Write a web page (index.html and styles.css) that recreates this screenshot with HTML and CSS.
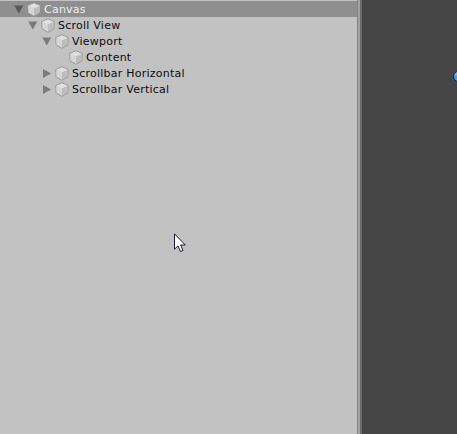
FILE: index.html
```html
<!DOCTYPE html>
<html lang="en">
<head>
<meta charset="utf-8">
<title>Hierarchy</title>
<link rel="stylesheet" href="styles.css">
</head>
<body>
<svg class="defs" aria-hidden="true">
  <symbol id="cube" viewBox="0 0 14 15">
    <path d="M7 .8 13.2 3.5 12.9 10.8 7 14.2 1.1 10.8 .8 3.5Z" fill="#d0d0d0" stroke="#929292" stroke-width=".9" stroke-linejoin="round"/>
    <path d="M7 1.4 12.6 3.8 7 6.5 1.4 3.8Z" fill="#e0e0e0"/>
    <path d="M1.3 3.9 7 6.6V13.6L1.6 10.5Z" fill="#d6d6d6"/>
    <path d="M12.7 3.9 7 6.6V13.6L12.4 10.5Z" fill="#bdbdbd"/>
  </symbol>
  <symbol id="down" viewBox="0 0 10 9"><path d="M.3 .5H9.2L4.8 8.5Z"/></symbol>
  <symbol id="right" viewBox="0 0 10 9"><path d="M1 0V9L9 4.5Z"/></symbol>
</svg>
<div class="editor">
  <div class="hierarchy">
    <div class="row selected"><svg class="arrow"><use href="#down"/></svg><svg class="cube"><use href="#cube"/></svg><span class="name">Canvas</span></div>
    <div class="row level-1"><svg class="arrow"><use href="#down"/></svg><svg class="cube"><use href="#cube"/></svg><span class="name">Scroll View</span></div>
    <div class="row level-2"><svg class="arrow"><use href="#down"/></svg><svg class="cube"><use href="#cube"/></svg><span class="name">Viewport</span></div>
    <div class="row level-3"><svg class="arrow"></svg><svg class="cube"><use href="#cube"/></svg><span class="name">Content</span></div>
    <div class="row level-2"><svg class="arrow"><use href="#right"/></svg><svg class="cube"><use href="#cube"/></svg><span class="name">Scrollbar Horizontal</span></div>
    <div class="row level-2"><svg class="arrow"><use href="#right"/></svg><svg class="cube"><use href="#cube"/></svg><span class="name">Scrollbar Vertical</span></div>
  </div>
  <div class="divider"></div>
  <div class="scene"><div class="handle"></div></div>
  <svg class="cursor" viewBox="0 0 12 20"><path d="M.5 .8V16.2L4 12.9 6.5 18.6 9 17.5 6.6 12H11.3Z" fill="#fff" stroke="#171b2b" stroke-width="1"/></svg>
</div>
</body>
</html>
```

FILE: styles.css
```css
body {
  margin: 0;
  overflow: hidden;
  background: #c2c2c2;
  font: 11px/16px "DejaVu Sans", sans-serif;
  letter-spacing: 0.24px;
  color: #0b0b0b;
}
.defs { position: absolute; width: 0; height: 0; }
.editor { display: flex; position: relative; height: 434px; }
.hierarchy {
  box-sizing: border-box;
  width: 357px;
  padding-top: 1px;
  background: #c2c2c2;
}
.row {
  display: flex;
  align-items: center;
  height: 16px;
  padding-left: 14px;
  white-space: nowrap;
}
.selected { background: #8f8f8f; color: #f0f0f0; }
.level-1 { padding-left: 28px; }
.level-2 { padding-left: 42px; }
.level-3 { padding-left: 56px; }
.name { padding-top: 2px; }
.arrow { width: 10px; height: 9px; margin-right: 3px; fill: #7b7b7b; }
.selected .arrow { fill: #585858; }
.cube { width: 14px; height: 15px; margin-right: 3px; }
.divider {
  box-sizing: border-box;
  width: 5px;
  background: #a2a2a2;
  border-left: 1px solid #858585;
  border-right: 2px solid #6b6b6b;
}
.scene { position: relative; flex: 1; overflow: hidden; background: #464646; }
.handle {
  box-sizing: border-box;
  position: absolute;
  left: 91px;
  top: 71px;
  width: 11px;
  height: 11px;
  border: 1px solid #18283c;
  border-radius: 50%;
  background: linear-gradient(#9acbff, #3b8eed 60%, #62b0ff);
}
.cursor { position: absolute; left: 174px; top: 233px; width: 12px; height: 20px; }
```
